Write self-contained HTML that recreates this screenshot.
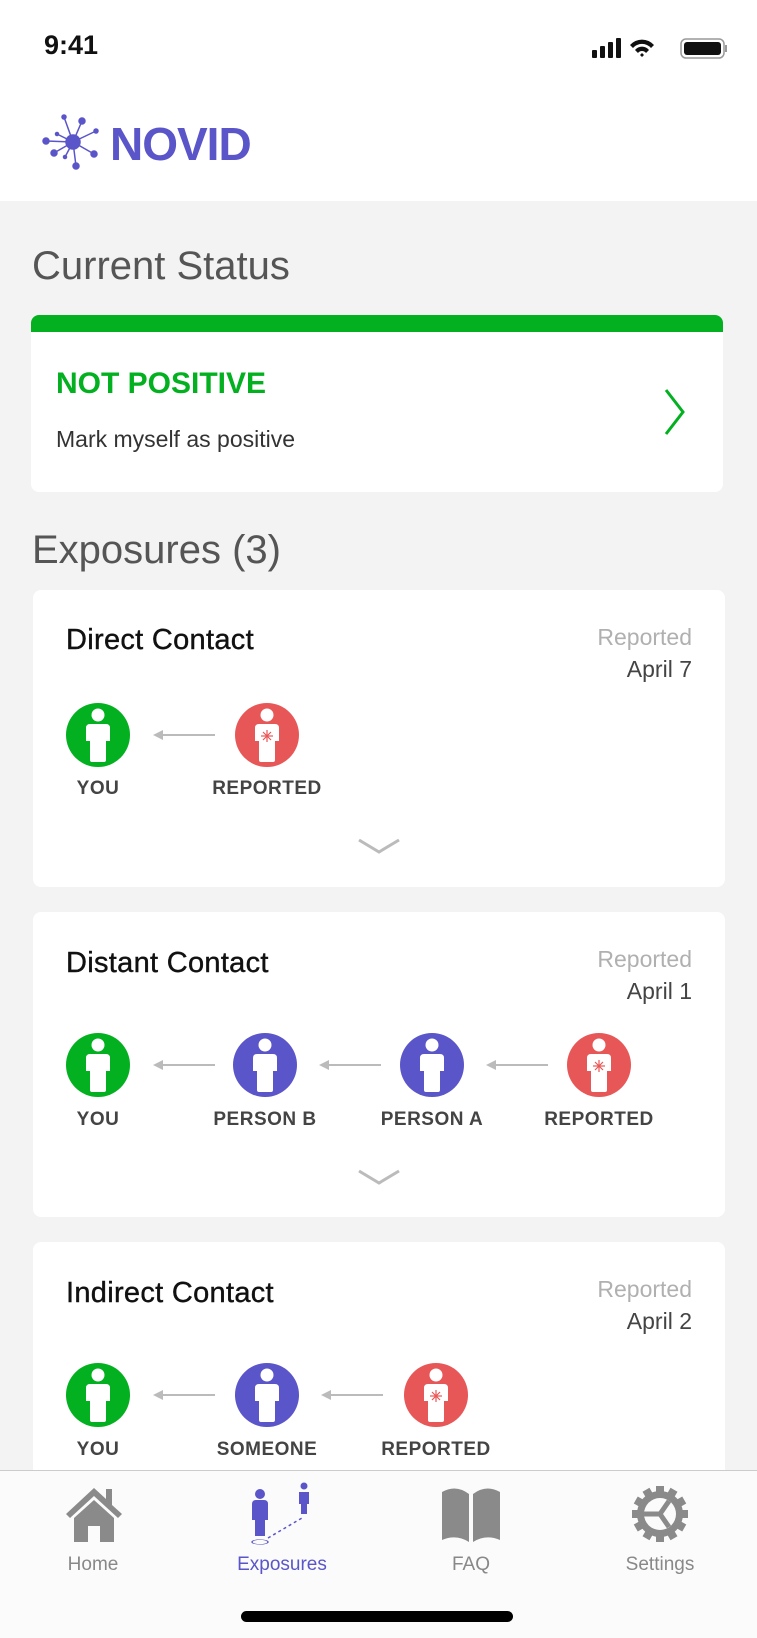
<!DOCTYPE html>
<html><head><meta charset="utf-8"><style>
*{margin:0;padding:0;box-sizing:border-box}
body{width:757px;height:1638px;background:#f3f3f3;font-family:"Liberation Sans",sans-serif;position:relative;overflow:hidden}
.a{position:absolute}
.card{position:absolute;left:33px;width:692px;background:#fff;border-radius:8px}
.t{position:absolute;left:33px;font-size:29px;color:#111;letter-spacing:0.3px;-webkit-text-stroke:0.4px #111}
.rep{position:absolute;right:33px;text-align:right;font-size:23px;color:#b0b0b0;line-height:32px}
.rep b{font-weight:normal;color:#444;display:block}
.ic{position:absolute;width:64px;height:64px}
.lb{position:absolute;width:160px;text-align:center;font-weight:bold;font-size:19px;color:#444;letter-spacing:0.5px}
.ar{position:absolute;width:64px;height:12px}
.tab{position:absolute;width:160px;text-align:center;font-size:19px;color:#888;top:1554px}
</style></head><body>
<div class="a" style="left:0;top:0;width:757px;height:201px;background:#fff"></div>
<div class="a" style="left:44px;top:30px;font-size:27px;font-weight:bold;color:#111">9:41</div>
<svg class="a" style="left:590px;top:36px" width="140" height="24" viewBox="0 0 140 24">
<rect x="2" y="14" width="5" height="8" rx="1" fill="#111"/><rect x="10" y="10" width="5" height="12" rx="1" fill="#111"/><rect x="18" y="6" width="5" height="16" rx="1" fill="#111"/><rect x="26" y="2" width="5" height="20" rx="1" fill="#111"/>
<path d="M40 9 a16 16 0 0 1 24 0 l-3 3 a12 12 0 0 0 -18 0z M45 14 a9 9 0 0 1 14 0 l-3 3 a5 5 0 0 0 -8 0z M50 19 l2 -2 l2 2 l-2 2z" fill="#111"/>
<rect x="91" y="3" width="43" height="19" rx="5" fill="none" stroke="#999" stroke-width="1.5"/><rect x="94" y="6" width="37" height="13" rx="3" fill="#111"/><rect x="135" y="9" width="2" height="7" fill="#999"/>
</svg>
<svg class="a" style="left:40px;top:112px" width="66" height="62" viewBox="40 112 66 62">
<g stroke="#5a55c8" stroke-width="1.5" fill="#5a55c8">
<line x1="73" y1="142" x2="64" y2="117"/><line x1="73" y1="142" x2="82" y2="121"/><line x1="73" y1="142" x2="96" y2="131"/><line x1="73" y1="142" x2="46" y2="141"/><line x1="73" y1="142" x2="54" y2="153"/><line x1="73" y1="142" x2="94" y2="154"/><line x1="73" y1="142" x2="76" y2="166"/><line x1="73" y1="142" x2="57" y2="134"/><line x1="73" y1="142" x2="65" y2="157"/>
<circle cx="73" cy="142" r="7"/><circle cx="64" cy="117" r="2"/><circle cx="82" cy="121" r="3"/><circle cx="96" cy="131" r="2"/><circle cx="46" cy="141" r="3"/><circle cx="54" cy="153" r="3"/><circle cx="94" cy="154" r="3"/><circle cx="76" cy="166" r="3"/><circle cx="57" cy="134" r="1.5"/><circle cx="65" cy="157" r="1.5"/>
</g></svg>
<div class="a" style="left:110px;top:117px;font-size:46px;font-weight:bold;color:#5a55c8;letter-spacing:-1px">NOVID</div>

<div class="a" style="left:32px;top:242px;font-size:40px;color:#555;font-weight:300;line-height:48px">Current Status</div>
<div class="a" style="left:31px;top:315px;width:692px;height:177px;background:#fff;border-radius:8px;overflow:hidden">
<div style="height:17px;background:#03b020"></div>
<div class="a" style="left:25px;top:52px;font-size:30px;font-weight:bold;color:#03b020">NOT POSITIVE</div>
<div class="a" style="left:25px;top:111px;font-size:23px;color:#333">Mark myself as positive</div>
<svg class="a" style="left:632px;top:72px" width="24" height="50"><path d="M3 3 L20 25 L3 47" fill="none" stroke="#03b020" stroke-width="3"/></svg>
</div>
<div class="a" style="left:32px;top:526px;font-size:40px;color:#555;line-height:48px">Exposures (3)</div>

<svg width="0" height="0" style="position:absolute"><defs>
<g id="p"><circle cx="32" cy="12" r="6.5" fill="#fff"/><path d="M20 25 q0 -4 4 -4 h16 q4 0 4 4 v13 h-4 v19 q0 2 -2 2 h-12 q-2 0 -2 -2 v-19 h-4z" fill="#fff"/></g>
<g id="s" stroke="#e85757" stroke-width="1.2"><line x1="26" y1="33" x2="38" y2="33"/><line x1="32" y1="27" x2="32" y2="39"/><line x1="28" y1="29" x2="36" y2="37"/><line x1="36" y1="29" x2="28" y2="37"/></g>
<g id="arr"><path d="M2 6 L12 1 L12 11z" fill="#bbb"/><rect x="10" y="5" width="54" height="2" fill="#bbb"/></g>
<g id="dn"><path d="M2 2 L22 14 L42 2" fill="none" stroke="#bbb" stroke-width="3"/></g>
</defs></svg>

<!-- card1 -->
<div class="card" style="top:590px;height:297px">
<div class="t" style="top:34px">Direct Contact</div>
<div class="rep" style="top:31px">Reported<b>April 7</b></div>
</div>
<svg class="ic" style="left:66px;top:703px"><circle cx="32" cy="32" r="32" fill="#03b020"/><use href="#p"/></svg>
<svg class="ar" style="left:151px;top:729px"><use href="#arr"/></svg>
<svg class="ic" style="left:235px;top:703px"><circle cx="32" cy="32" r="32" fill="#e85757"/><use href="#p"/><use href="#s"/></svg>
<div class="lb" style="left:18px;top:778px">YOU</div>
<div class="lb" style="left:187px;top:778px">REPORTED</div>
<svg class="a" style="left:357px;top:838px" width="44" height="18"><use href="#dn"/></svg>

<!-- card2 -->
<div class="card" style="top:912px;height:305px">
<div class="t" style="top:35px">Distant Contact</div>
<div class="rep" style="top:31px">Reported<b>April 1</b></div>
</div>
<svg class="ic" style="left:66px;top:1033px"><circle cx="32" cy="32" r="32" fill="#03b020"/><use href="#p"/></svg>
<svg class="ar" style="left:151px;top:1059px"><use href="#arr"/></svg>
<svg class="ic" style="left:233px;top:1033px"><circle cx="32" cy="32" r="32" fill="#5a55c8"/><use href="#p"/></svg>
<svg class="ar" style="left:317px;top:1059px"><use href="#arr"/></svg>
<svg class="ic" style="left:400px;top:1033px"><circle cx="32" cy="32" r="32" fill="#5a55c8"/><use href="#p"/></svg>
<svg class="ar" style="left:484px;top:1059px"><use href="#arr"/></svg>
<svg class="ic" style="left:567px;top:1033px"><circle cx="32" cy="32" r="32" fill="#e85757"/><use href="#p"/><use href="#s"/></svg>
<div class="lb" style="left:18px;top:1109px">YOU</div>
<div class="lb" style="left:185px;top:1109px">PERSON B</div>
<div class="lb" style="left:352px;top:1109px">PERSON A</div>
<div class="lb" style="left:519px;top:1109px">REPORTED</div>
<svg class="a" style="left:357px;top:1169px" width="44" height="18"><use href="#dn"/></svg>

<!-- card3 -->
<div class="card" style="top:1242px;height:260px">
<div class="t" style="top:35px">Indirect Contact</div>
<div class="rep" style="top:31px">Reported<b>April 2</b></div>
</div>
<svg class="ic" style="left:66px;top:1363px"><circle cx="32" cy="32" r="32" fill="#03b020"/><use href="#p"/></svg>
<svg class="ar" style="left:151px;top:1389px"><use href="#arr"/></svg>
<svg class="ic" style="left:235px;top:1363px"><circle cx="32" cy="32" r="32" fill="#5a55c8"/><use href="#p"/></svg>
<svg class="ar" style="left:319px;top:1389px"><use href="#arr"/></svg>
<svg class="ic" style="left:404px;top:1363px"><circle cx="32" cy="32" r="32" fill="#e85757"/><use href="#p"/><use href="#s"/></svg>
<div class="lb" style="left:18px;top:1439px">YOU</div>
<div class="lb" style="left:187px;top:1439px">SOMEONE</div>
<div class="lb" style="left:356px;top:1439px">REPORTED</div>

<!-- tab bar -->
<div class="a" style="left:0;top:1470px;width:757px;height:168px;background:#fbfbfb;border-top:1px solid #ccc"></div>
<svg class="a" style="left:64px;top:1484px" width="60" height="60" viewBox="0 0 60 60"><path d="M30 4 L2 30 l4 4 L30 12 L54 34 l4 -4 L48 21 V5 h-6 v10z" fill="#8a8a8a"/><path d="M10 34 L30 16 L50 34 V58 H36 V42 H24 V58 H10z" fill="#8a8a8a"/></svg>
<svg class="a" style="left:248px;top:1482px" width="70" height="66" viewBox="0 0 70 66"><circle cx="12" cy="12" r="5" fill="#5a55c8"/><path d="M4 22 q0-4 4-4 h8 q4 0 4 4 v16 h-3 v16 h-10 v-16 h-3z" fill="#5a55c8"/><circle cx="12" cy="60" r="8" fill="none" stroke="#5a55c8" stroke-width="1.5" transform="scale(1 .3) translate(0 140)"/><circle cx="56" cy="4" r="3.5" fill="#5a55c8"/><path d="M51 10 h10 v12 h-2 v10 h-6 v-10 h-2z" fill="#5a55c8"/><path d="M20 56 L54 36" stroke="#5a55c8" stroke-width="1.5" stroke-dasharray="3 3"/></svg>
<svg class="a" style="left:442px;top:1486px" width="58" height="56" viewBox="0 0 58 56"><path d="M0 6 q14 -8 27 2 v48 q-13 -8 -27 -2z M31 8 q13 -10 27 -2 v48 q-14 -6 -27 2z" fill="#8a8a8a"/></svg>
<svg class="a" style="left:632px;top:1485px" width="56" height="58" viewBox="-28 -29 56 58"><g fill="#8a8a8a"><circle r="23"/><g id="tt"><rect x="-4" y="-28" width="8" height="8"/></g><use href="#tt" transform="rotate(30)"/><use href="#tt" transform="rotate(60)"/><use href="#tt" transform="rotate(90)"/><use href="#tt" transform="rotate(120)"/><use href="#tt" transform="rotate(150)"/><use href="#tt" transform="rotate(180)"/><use href="#tt" transform="rotate(210)"/><use href="#tt" transform="rotate(240)"/><use href="#tt" transform="rotate(270)"/><use href="#tt" transform="rotate(300)"/><use href="#tt" transform="rotate(330)"/></g><circle r="16" fill="#fbfbfb"/><g stroke="#8a8a8a" stroke-width="5"><line x1="0" y1="0" x2="-16" y2="0"/><line x1="0" y1="0" x2="9" y2="-13"/><line x1="0" y1="0" x2="9" y2="13"/></g></svg>
<div class="tab" style="left:13px">Home</div>
<div class="tab" style="left:202px;color:#5a55c8">Exposures</div>
<div class="tab" style="left:391px">FAQ</div>
<div class="tab" style="left:580px">Settings</div>
<div class="a" style="left:241px;top:1611px;width:272px;height:11px;border-radius:6px;background:#000"></div>
</body></html>
